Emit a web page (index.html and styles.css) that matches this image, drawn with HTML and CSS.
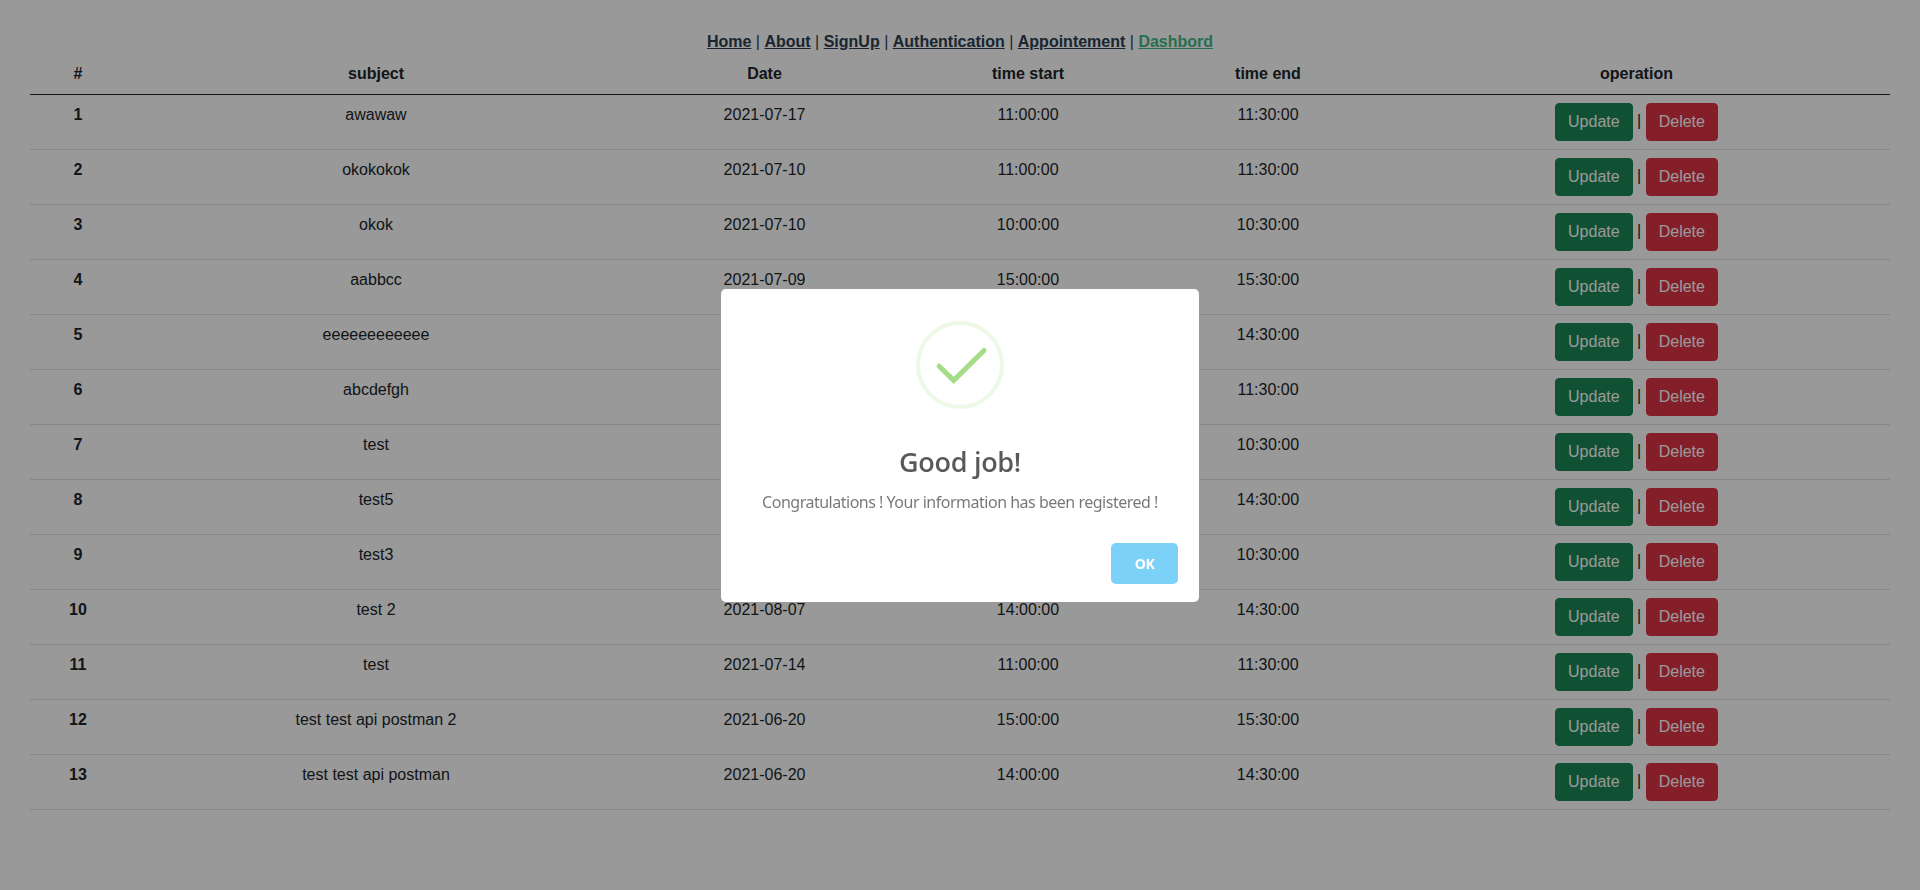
FILE: index.html
```html
<!DOCTYPE html>
<html lang="en">
<head>
<meta charset="utf-8">
<title>Dashbord</title>
<link rel="stylesheet" href="styles.css">
</head>
<body>
<nav class="nav"><a href="#">Home</a> | <a href="#">About</a> | <a href="#">SignUp</a> | <a href="#">Authentication</a> | <a href="#">Appointement</a> | <a href="#" class="active">Dashbord</a></nav>
<main class="content">
<table class="table">
<colgroup><col class="c-id"><col class="c-subject"><col class="c-date"><col class="c-start"><col class="c-end"><col class="c-op"></colgroup>
<thead><tr><th>#</th><th>subject</th><th>Date</th><th>time start</th><th>time end</th><th>operation</th></tr></thead>
<tbody>
<tr><th>1</th><td>awawaw</td><td>2021-07-17</td><td>11:00:00</td><td>11:30:00</td><td><button class="btn update">Update</button> | <button class="btn delete">Delete</button></td></tr>
<tr><th>2</th><td>okokokok</td><td>2021-07-10</td><td>11:00:00</td><td>11:30:00</td><td><button class="btn update">Update</button> | <button class="btn delete">Delete</button></td></tr>
<tr><th>3</th><td>okok</td><td>2021-07-10</td><td>10:00:00</td><td>10:30:00</td><td><button class="btn update">Update</button> | <button class="btn delete">Delete</button></td></tr>
<tr><th>4</th><td>aabbcc</td><td>2021-07-09</td><td>15:00:00</td><td>15:30:00</td><td><button class="btn update">Update</button> | <button class="btn delete">Delete</button></td></tr>
<tr><th>5</th><td>eeeeeeeeeeee</td><td></td><td></td><td>14:30:00</td><td><button class="btn update">Update</button> | <button class="btn delete">Delete</button></td></tr>
<tr><th>6</th><td>abcdefgh</td><td></td><td></td><td>11:30:00</td><td><button class="btn update">Update</button> | <button class="btn delete">Delete</button></td></tr>
<tr><th>7</th><td>test</td><td></td><td></td><td>10:30:00</td><td><button class="btn update">Update</button> | <button class="btn delete">Delete</button></td></tr>
<tr><th>8</th><td>test5</td><td></td><td></td><td>14:30:00</td><td><button class="btn update">Update</button> | <button class="btn delete">Delete</button></td></tr>
<tr><th>9</th><td>test3</td><td></td><td></td><td>10:30:00</td><td><button class="btn update">Update</button> | <button class="btn delete">Delete</button></td></tr>
<tr><th>10</th><td>test 2</td><td>2021-08-07</td><td>14:00:00</td><td>14:30:00</td><td><button class="btn update">Update</button> | <button class="btn delete">Delete</button></td></tr>
<tr><th>11</th><td>test</td><td>2021-07-14</td><td>11:00:00</td><td>11:30:00</td><td><button class="btn update">Update</button> | <button class="btn delete">Delete</button></td></tr>
<tr><th>12</th><td>test test api postman 2</td><td>2021-06-20</td><td>15:00:00</td><td>15:30:00</td><td><button class="btn update">Update</button> | <button class="btn delete">Delete</button></td></tr>
<tr><th>13</th><td>test test api postman</td><td>2021-06-20</td><td>14:00:00</td><td>14:30:00</td><td><button class="btn update">Update</button> | <button class="btn delete">Delete</button></td></tr>
</tbody>
</table>
</main>
<div class="overlay">
<div class="modal" role="dialog">
<svg class="icon" width="88" height="88" viewBox="0 0 88 88" fill="none">
<circle cx="44" cy="44" r="42" stroke="#a5dc86" stroke-opacity=".2" stroke-width="4"/>
<path d="M23.2 45.2 37.7 59.4 68 29.5" stroke="#a5dc86" stroke-width="5" stroke-linecap="round" stroke-linejoin="miter"/>
</svg>
<div class="title">Good job!</div>
<div class="text">Congratulations ! Your information has been registered !</div>
<div class="footer"><button class="ok">OK</button></div>
</div>
</div>
</body>
</html>
```

FILE: styles.css
```css
* { box-sizing: border-box; }
body {
  margin: 0;
  height: 890px;
  overflow: hidden;
  background: #fff;
  color: #212529;
  font: 16px/24px "Liberation Sans", Arial, sans-serif;
  text-align: center;
}
.nav { padding-top: 30px; color: #2c3e50; }
.nav a { color: #2c3e50; font-weight: bold; text-decoration: underline; }
.nav a.active { color: #42b983; }
.content { padding: 0 30px; }
.table { width: 1860px; table-layout: fixed; border-collapse: separate; border-spacing: 0; }
.c-id { width: 96px; }
.c-subject { width: 500px; }
.c-date { width: 277px; }
.c-start { width: 250px; }
.c-end { width: 230px; }
.c-op { width: 507px; }
.table th, .table td { padding: 8px; vertical-align: top; border-bottom: 1px solid #dee2e6; }
.table thead th { border-bottom-color: #212529; }
.btn {
  height: 38px;
  padding: 6px 12px;
  border: 1px solid;
  border-radius: 4px;
  color: #fff;
  font: inherit;
  vertical-align: middle;
}
.update { background: #198754; border-color: #198754; }
.delete { background: #dc3545; border-color: #dc3545; }

.overlay {
  position: fixed;
  inset: 0;
  display: flex;
  align-items: center;
  justify-content: center;
  background: rgba(0, 0, 0, .4);
}
.modal {
  display: flex;
  flex-direction: column;
  align-items: center;
  width: 478px;
  height: 313px;
  border-radius: 5px;
  background: #fff;
  font-family: "Noto Sans", "Open Sans", sans-serif;
}
.icon { margin-top: 32px; }
.title {
  margin-top: 33px;
  font-family: "Open Sans", "Noto Sans", sans-serif;
  font-size: 27px;
  line-height: 40px;
  font-weight: 600;
  letter-spacing: -.3px;
  color: rgba(0, 0, 0, .65);
  white-space: nowrap;
}
.text {
  margin-top: 8px;
  font-size: 16px;
  line-height: 24px;
  letter-spacing: -.49px;
  color: rgba(0, 0, 0, .54);
  white-space: nowrap;
}
.footer { align-self: flex-end; margin-top: 29px; padding-right: 21px; }
.ok {
  display: block;
  width: 67px;
  height: 41px;
  padding: 0;
  border: 0;
  border-radius: 5px;
  background: #7cd1f9;
  color: #fff;
  font: 700 14px/41px "Open Sans", "Noto Sans", sans-serif;
  letter-spacing: -.5px;
}
```
